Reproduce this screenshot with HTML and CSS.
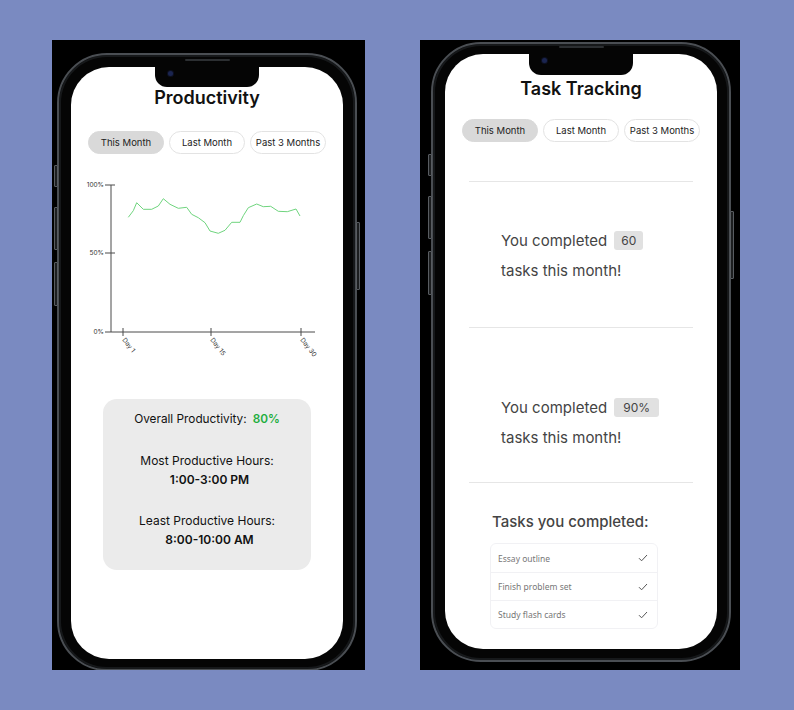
FILE: index.html
```html
<!doctype html>
<html>
<head>
	<meta charset="utf-8">
	<title>Productivity screens</title>
	<link rel="stylesheet" href="styles.css">
</head>
<body>
	<div class="panel panel-left">
		<div class="phone">
			<span class="speaker"></span>
			<span class="btn btn-mute"></span>
			<span class="btn btn-up"></span>
			<span class="btn btn-down"></span>
			<span class="btn btn-power"></span>
			<div class="screen">
				<div class="notch"><span class="camera"></span></div>
				<h1 class="title">Productivity</h1>
				<div class="tabs">
					<span class="tab active">This Month</span>
					<span class="tab">Last Month</span>
					<span class="tab">Past 3 Months</span>
				</div>
				<svg class="chart" width="273" height="200" viewBox="0 0 273 200">
					<g stroke="#4a4a4a" stroke-width="1" fill="none">
						<path d="M40 10V157H244"/>
						<path d="M34 10H44M34 78H44M34 157H40"/>
						<path d="M52 153V161M140 153V161M230 153V161"/>
					</g>
					<g font-family="Inter, sans-serif" font-size="6.5" fill="#333" text-anchor="end">
						<text x="33" y="12">100%</text>
						<text x="33" y="80">50%</text>
						<text x="33" y="159">0%</text>
					</g>
					<g font-family="Inter, sans-serif" font-size="6.5" fill="#333">
						<text transform="translate(51 165) rotate(52)">Day 1</text>
						<text transform="translate(139 165) rotate(52)">Day 15</text>
						<text transform="translate(229 165) rotate(52)">Day 30</text>
					</g>
					<polyline fill="none" stroke="#6fd47e" stroke-width="1" stroke-linejoin="round"
						points="57.3,42.3 62.3,35.7 65.7,27.7 72.3,34.3 80.7,34.3 87.3,31 92.3,23.7 99,29.3 107.3,33.3 115.7,32.3 120.7,39.3 127.3,42.7 134,47.7 139,56 147.3,58.3 154,55.3 160.7,47.3 169,47.3 172.3,40.7 177.3,32.7 185.7,29 192.3,31.7 199.7,31.3 207.3,36.3 216.3,36.7 225,34 229,41"/>
				</svg>
				<div class="stats">
					<p class="stat-line">Overall Productivity:<b class="good">80%</b></p>
					<p class="stat-label">Most Productive Hours:</p>
					<p class="stat-value">1:00-3:00 PM</p>
					<p class="stat-label">Least Productive Hours:</p>
					<p class="stat-value">8:00-10:00 AM</p>
				</div>
			</div>
		</div>
	</div>

	<div class="panel panel-right">
		<div class="phone phone-tall">
			<span class="speaker"></span>
			<span class="btn btn-mute"></span>
			<span class="btn btn-up"></span>
			<span class="btn btn-down"></span>
			<span class="btn btn-power"></span>
			<div class="screen">
				<div class="notch"><span class="camera"></span></div>
				<h1 class="title title-tasks">Task Tracking</h1>
				<div class="tabs">
					<span class="tab active">This Month</span>
					<span class="tab">Last Month</span>
					<span class="tab">Past 3 Months</span>
				</div>
				<hr class="rule rule-first">
				<div class="summary summary-first">
					<p>You completed <span class="badge">60</span></p>
					<p>tasks this month!</p>
				</div>
				<hr class="rule rule-second">
				<div class="summary summary-second">
					<p>You completed <span class="badge badge-wide">90%</span></p>
					<p>tasks this month!</p>
				</div>
				<hr class="rule rule-third">
				<h2 class="done-title">Tasks you completed:</h2>
				<ul class="done-list">
					<li>Essay outline <svg width="10" height="8" viewBox="0 0 10 8"><path d="M1 4.2L3.6 6.8L9 1" fill="none" stroke="#555" stroke-width="1"/></svg></li>
					<li>Finish problem set <svg width="10" height="8" viewBox="0 0 10 8"><path d="M1 4.2L3.6 6.8L9 1" fill="none" stroke="#555" stroke-width="1"/></svg></li>
					<li>Study flash cards <svg width="10" height="8" viewBox="0 0 10 8"><path d="M1 4.2L3.6 6.8L9 1" fill="none" stroke="#555" stroke-width="1"/></svg></li>
				</ul>
			</div>
		</div>
	</div>
</body>
</html>
```

FILE: styles.css
```css
html, body {
	margin: 0;
	height: 100%;
}
body {
	background: #7a8ac1;
	display: flex;
	align-items: flex-start;
	gap: 55px;
	padding: 40px 0 0 52px;
	box-sizing: border-box;
	font-family: Inter, "Noto Sans", sans-serif;
	color: #111;
}
p, h1, h2, ul {
	margin: 0;
	padding: 0;
}

.panel {
	background: #000;
	height: 630px;
	overflow: hidden;
	box-sizing: border-box;
}
.panel-left {
	width: 313px;
	padding: 13px 0 0 5px;
}
.panel-right {
	width: 320px;
	padding: 2px 0 0 11px;
}

.phone {
	position: relative;
	width: 300px;
	box-sizing: border-box;
	padding: 12px 12px 10px;
	border: 2px solid #4a4e53;
	border-radius: 50px;
	background: #050505;
	box-shadow: inset 0 0 0 2px #16181a;
}
.phone-tall {
	padding: 10px 12px 11px;
}
.speaker {
	position: absolute;
	top: 4px;
	left: 126px;
	width: 45px;
	height: 2px;
	border-radius: 1px;
	background: #2c2f32;
}
.phone-tall .speaker {
	top: 2px;
}
.btn {
	position: absolute;
	width: 2px;
	background: #1c1e20;
	border: 1px solid #585c61;
	border-radius: 1px;
}
.btn-mute { left: -5px; top: 110px; height: 20px; }
.btn-up { left: -5px; top: 152px; height: 41px; }
.btn-down { left: -5px; top: 207px; height: 42px; }
.btn-power { right: -5px; top: 167px; height: 66px; }

.screen {
	position: relative;
	background: #fff;
	border-radius: 38px;
	overflow: hidden;
	height: 592px;
}
.phone-tall .screen {
	height: 595px;
}
.notch {
	position: absolute;
	top: 0;
	left: 84px;
	width: 104px;
	height: 20px;
	background: #050505;
	border-radius: 0 0 12px 12px;
}
.phone-tall .notch {
	height: 21px;
}
.camera {
	position: absolute;
	left: 13px;
	top: 4px;
	width: 5px;
	height: 5px;
	border-radius: 50%;
	background: #1b2550;
	box-shadow: 0 0 0 1px #0d1020;
}

.title {
	margin-top: 19px;
	font-size: 18px;
	line-height: 24px;
	font-weight: 600;
	text-align: center;
	color: #111;
}
.title-tasks {
	margin-top: 23px;
}
.tabs {
	display: flex;
	justify-content: center;
	gap: 5px;
	margin-top: 21px;
}
.title-tasks + .tabs {
	margin-top: 18px;
}
.tab {
	width: 76px;
	height: 23px;
	box-sizing: border-box;
	border: 1px solid #e3e3e3;
	border-radius: 12px;
	font-size: 9.5px;
	line-height: 21px;
	text-align: center;
	color: #222;
	background: #fff;
}
.tab.active {
	background: #d9d9d9;
	border-color: #d9d9d9;
}

.chart {
	display: block;
	margin-top: 21px;
}
.stats {
	width: 208px;
	height: 171px;
	margin: 24px auto 0;
	box-sizing: border-box;
	padding-top: 11px;
	background: #ebebeb;
	border-radius: 14px;
	text-align: center;
	font-size: 12px;
	line-height: 18px;
}
.stat-line {
	font-size: 11.8px;
}
.good {
	margin-left: 6px;
	color: #1fae3f;
	font-weight: 600;
}
.stat-label {
	margin-top: 24px;
}
.stat-value {
	margin-top: 1px;
	padding-left: 5px;
	font-weight: 600;
}
.stat-value + .stat-label {
	margin-top: 23px;
}

.rule {
	width: 224px;
	margin: 0 auto;
	border: 0;
	border-top: 1px solid #e6e6e6;
}
.rule-first { margin-top: 39px; }
.rule-second { margin-top: 41px; }
.rule-third { margin-top: 29px; }
.summary {
	padding-left: 56px;
	font-size: 15px;
	line-height: 30px;
	color: #444;
}
.summary-first { margin-top: 44px; }
.summary-second { margin-top: 65px; }
.badge {
	display: inline-block;
	margin-left: 3px;
	padding: 0 7px;
	height: 19px;
	line-height: 19px;
	border-radius: 3px;
	background: #e1e1e1;
	font-size: 12px;
	vertical-align: 1px;
	color: #444;
}
.badge-wide {
	padding: 0 9px;
}
.done-title {
	margin-top: 27px;
	padding-left: 47px;
	font-size: 15px;
	line-height: 24px;
	font-weight: 500;
	color: #444;
}
.done-list {
	list-style: none;
	width: 166px;
	margin: 9px 0 0 45px;
	border: 1px solid #f1f1f4;
	border-radius: 6px;
}
.done-list li {
	display: flex;
	justify-content: space-between;
	align-items: center;
	height: 27px;
	padding: 0 9px 0 7px;
	font-family: "Noto Sans", sans-serif;
	font-size: 8.5px;
	color: #777;
}
.done-list li:first-child {
	height: 28px;
}
.done-list li + li {
	border-top: 1px solid #f1f1f4;
}
```
